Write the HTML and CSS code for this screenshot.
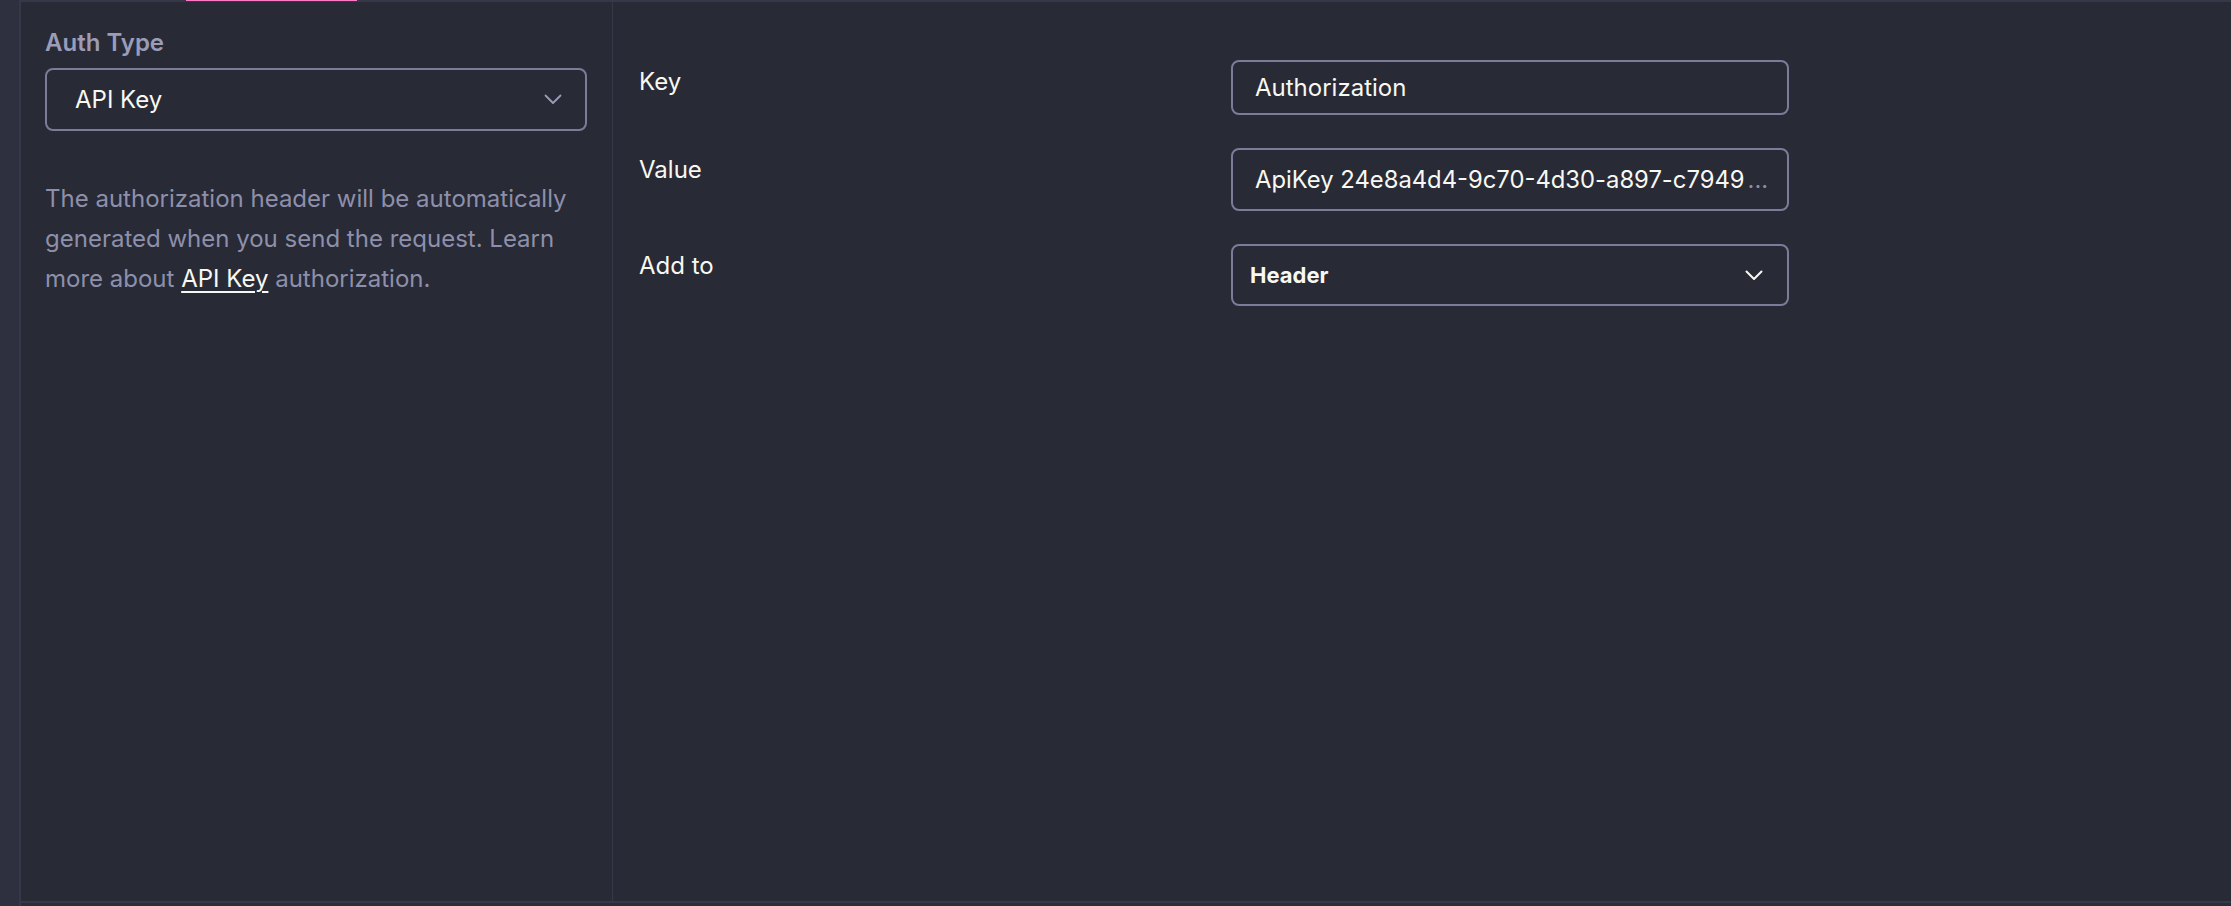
FILE: index.html
```html
<!DOCTYPE html>
<html lang="en">
<head>
<meta charset="utf-8">
<title>Auth</title>
<link rel="stylesheet" href="styles.css">
</head>
<body>
<div class="app">
  <aside class="rail"></aside>
  <div class="pane">
    <div class="tabline"><span class="tab-indicator"></span></div>
    <div class="content">
      <section class="auth-type">
        <div class="section-label">Auth Type</div>
        <div class="select">
          <span class="select-value">API Key</span>
          <svg class="chev chev-muted" width="18" height="11" viewBox="0 0 18 11"><path d="M1.5 1.5 L9 9 L16.5 1.5" fill="none" stroke="currentColor" stroke-width="1.8" stroke-linecap="round" stroke-linejoin="round"/></svg>
        </div>
        <p class="desc">The authorization header will be automatically generated when you send the request. Learn more about <a class="link" href="#">API Key</a> authorization.</p>
      </section>
      <section class="auth-form">
        <div class="form-grid">
          <div class="field-label">Key</div>
          <div class="input input-key">Authorization</div>
          <div class="field-label">Value</div>
          <div class="input input-value"><span class="value-text">ApiKey 24e8a4d4-9c70-4d30-a897-c7949</span><span class="ellipsis">...</span></div>
          <div class="field-label">Add to</div>
          <div class="input input-select">
            <span class="select-strong">Header</span>
            <svg class="chev chev-bright" width="18" height="11" viewBox="0 0 18 11"><path d="M1.5 1.5 L9 9 L16.5 1.5" fill="none" stroke="currentColor" stroke-width="2" stroke-linecap="round" stroke-linejoin="round"/></svg>
          </div>
        </div>
      </section>
    </div>
    <div class="bottomline"></div>
    <div class="footer"></div>
  </div>
</div>
</body>
</html>
```

FILE: styles.css
```css
* { box-sizing: border-box; }

html, body {
  margin: 0;
  padding: 0;
  width: 2231px;
  height: 906px;
  overflow: hidden;
  background: #282a36;
  font-family: Inter, "Noto Sans", sans-serif;
  color: #f8f8f2;
}

.app {
  display: flex;
  height: 906px;
}

.rail {
  width: 21px;
  flex: none;
  background: #2e303f;
  border-right: 2px solid #363849;
}

.pane {
  flex: 1;
  display: flex;
  flex-direction: column;
  min-width: 0;
}

.tabline {
  height: 2px;
  flex: none;
  background: #363849;
  display: flex;
}

.tab-indicator {
  margin-left: 165px;
  width: 171px;
  height: 1px;
  background: #ff79c6;
}

.content {
  flex: 1;
  display: flex;
  min-height: 0;
}

.auth-type {
  width: 592px;
  flex: none;
  padding: 26px 25px 0 24px;
  border-right: 1px solid #363849;
}

.section-label {
  font-size: 24px;
  line-height: 30px;
  font-weight: 600;
  color: #9a9cb8;
}

.select {
  margin-top: 10px;
  height: 63px;
  border: 2px solid #7a7c9a;
  border-radius: 8px;
  display: flex;
  align-items: center;
  justify-content: space-between;
  padding: 0 23px 0 28px;
}

.select-value {
  font-size: 24px;
  color: #f8f8f2;
}

.chev-muted { color: #9a9cb8; }
.chev-bright { color: #f8f8f2; }

.desc {
  margin: 48px 0 0;
  font-size: 24px;
  line-height: 40px;
  color: #8e90ab;
}

.link {
  color: #f8f8f2;
  text-decoration: underline;
  text-underline-offset: 4px;
  text-decoration-thickness: 2px;
}

.auth-form {
  flex: 1;
  padding: 58px 0 0 26px;
}

.form-grid {
  display: grid;
  grid-template-columns: 592px 558px;
  grid-template-rows: 55px 63px 62px;
  row-gap: 33px;
}

.field-label {
  font-size: 24px;
  line-height: 30px;
  padding-top: 7px;
  color: #f8f8f2;
}

.input {
  border: 2px solid #7a7c9a;
  border-radius: 8px;
  display: flex;
  align-items: center;
  font-size: 24px;
  color: #f8f8f2;
  padding: 0 22px;
  white-space: nowrap;
  overflow: hidden;
}

.input-value {
  padding: 0 8px 0 22px;
  font-size: 23.8px;
}

.value-text {
  flex: none;
}

.ellipsis {
  flex: none;
  margin-left: 3px;
  color: #8c8ea8;
}

.input-select {
  justify-content: space-between;
  padding: 0 24px 0 17px;
}

.select-strong {
  font-size: 22px;
  font-weight: 700;
}

.bottomline {
  height: 2px;
  flex: none;
  background: #363849;
}

.footer {
  height: 3px;
  flex: none;
  background: #2a2c3a;
}
```
